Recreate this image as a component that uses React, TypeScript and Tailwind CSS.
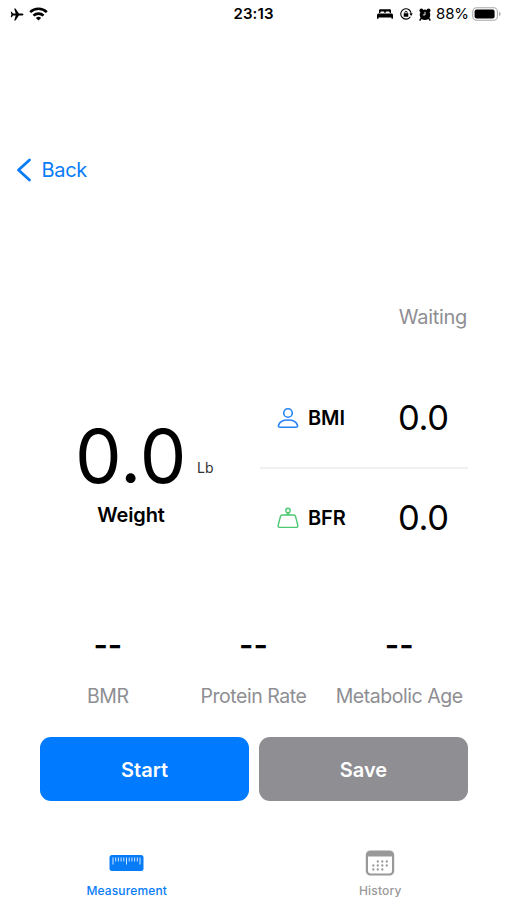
const stats = ["BMR", "Protein Rate", "Metabolic Age"];

const calendarDots = [
  [12.8, 12.5], [17.3, 12.5], [21.8, 12.5],
  [8.3, 16.5], [12.8, 16.5], [17.3, 16.5], [21.8, 16.5],
  [8.3, 20.5], [12.8, 20.5], [17.3, 20.5],
];

function StatusBar() {
  return (
    <header className="grid h-7 shrink-0 grid-cols-3 items-center text-black">
      <div className="flex items-center gap-[5px] pl-2.5">
        <svg className="h-[13px] w-[14px]" viewBox="0 0 14 13" fill="currentColor">
          <path d="M13.5 6.5c0-.7-.9-1.1-2-1.1H8.9L5.5.6H4.2l1.5 4.8H3L1.7 3.8H.7l.7 2.7-.7 2.7h1L3 7.6h2.7l-1.5 4.8h1.3l3.4-4.8h2.6c1.1 0 2-.4 2-1.1z" />
        </svg>
        <svg className="h-[14px] w-[19px]" viewBox="0 0 19 14" fill="none" stroke="currentColor" strokeWidth="2.7">
          <path d="M1.2 5.1a12 12 0 0 1 16.6 0" />
          <path d="M4.5 8.6a7.2 7.2 0 0 1 10 0" />
          <path d="M9.5 13.6 6.9 11a3.8 3.8 0 0 1 5.2 0z" fill="currentColor" stroke="none" />
        </svg>
      </div>
      <div className="text-center text-[15px] font-semibold tracking-[0.1px]">23:13</div>
      <div className="flex items-center justify-end pr-1.5">
        <svg className="mr-[7px] h-[10px] w-[16px]" viewBox="0 0 16 10" fill="currentColor">
          <path d="M2 4V1.5C2 .6 2.6.2 3.4.2h9.2c.8 0 1.4.4 1.4 1.3V4h-1.3V3.2c0-.5-.3-.8-.8-.8H9.4c-.5 0-.8.3-.8.8V4H7.4v-.8c0-.5-.3-.8-.8-.8H4.1c-.5 0-.8.3-.8.8V4zM0 6.3c0-1 .7-1.7 1.7-1.7h12.6c1 0 1.7.7 1.7 1.7v3.5h-1.5V8.4h-13v1.4H0z" />
        </svg>
        <svg className="mr-[6px] h-[12px] w-[13px]" viewBox="0 0 13 12" fill="none" stroke="currentColor" strokeWidth="1.1">
          <path d="M10.4 8.7A5.2 5.2 0 1 1 11.2 6" />
          <path d="M9.4 5.4h3.4L11.1 7.9z" fill="currentColor" stroke="none" />
          <rect x="3.7" y="5.3" width="4.6" height="3.5" rx=".5" fill="currentColor" stroke="none" />
          <path d="M4.8 5.4V4.5a1.2 1.2 0 0 1 2.4 0v.9" strokeWidth=".9" />
        </svg>
        <svg className="mr-[5px] h-[13px] w-[12px]" viewBox="0 0 12 13" fill="currentColor">
          <circle cx="6" cy="6.7" r="5.3" />
          <circle cx="2.4" cy="2.4" r="1.9" />
          <circle cx="9.6" cy="2.4" r="1.9" />
          <path d="m2.4 10-1.3 2M9.6 10l1.3 2" stroke="currentColor" strokeWidth="1.5" strokeLinecap="round" />
          <path d="M6 3.8v3.1H3.9" fill="none" stroke="#fff" strokeWidth=".9" />
        </svg>
        <span className="mr-[3px] text-[15px] tracking-[-0.1px]">88%</span>
        <svg className="h-[14px] w-[29px]" viewBox="0 0 29 14" fill="none">
          <rect x=".8" y=".8" width="24.6" height="12.4" rx="3.8" stroke="#a8a8a8" strokeWidth="1.1" />
          <rect x="2.6" y="2.6" width="20" height="8.8" rx="2" fill="#000" />
          <path d="M27 4.8c1.1.4 1.5 1.2 1.5 2.2S28.1 8.8 27 9.2z" fill="#a8a8a8" />
        </svg>
      </div>
    </header>
  );
}

function PersonIcon() {
  return (
    <svg className="h-[22px] w-[22px]" viewBox="0 0 22 22" fill="none" stroke="#2683f5" strokeWidth="1.6">
      <circle cx="11" cy="6" r="4.3" />
      <path d="M3.2 20.2C1.8 20.2 1.2 19.5 1.5 18.3 2.4 15.1 6.2 13 11 13s8.6 2.1 9.5 5.3c.3 1.2-.3 1.9-1.7 1.9z" />
    </svg>
  );
}

function WeightIcon() {
  return (
    <svg className="h-[22px] w-[22px]" viewBox="0 0 22 22" fill="none" stroke="#4cc96f" strokeWidth="1.4">
      <circle cx="11" cy="3.4" r="2.2" />
      <path d="M11 5.6v1.7M5.3 8h11.4c.9 0 1.5.4 1.8 1.3l2.3 9c.3 1.3-.3 2.1-1.5 2.1H2.7c-1.2 0-1.8-.8-1.5-2.1l2.3-9C3.8 8.4 4.4 8 5.3 8zM8.8 8c.2-.5.9-.9 2.2-.9s2 .4 2.2.9" />
    </svg>
  );
}

function MetricRow({ icon, label, value }: { icon: React.ReactNode; label: string; value: string }) {
  return (
    <div className="flex h-[98px] items-center pl-[17px]">
      {icon}
      <span className="ml-[9px] w-[90px] text-[20px] font-semibold tracking-[-0.1px]">{label}</span>
      <span className="text-[34.5px] leading-none tracking-[-0.4px]">{value}</span>
    </div>
  );
}

export default function App() {
  return (
    <div className="flex h-[900px] w-[507px] flex-col overflow-hidden bg-white font-['Inter',sans-serif] text-black [font-feature-settings:'ss03']">
      <StatusBar />

      <nav className="mt-[127px] flex h-[30px] shrink-0 items-center pl-4">
        <button type="button" className="flex items-center text-[20px] tracking-[-0.3px] text-[#087cf7]">
          <svg className="mr-[9.5px] h-6 w-4" viewBox="0 0 16 24" fill="none" stroke="currentColor" strokeWidth="2.8" strokeLinecap="round" strokeLinejoin="round">
            <path d="M13.5 2 2.5 12l11 10" />
          </svg>
          <span>Back</span>
        </button>
      </nav>

      <p className="mt-[117px] h-[30px] shrink-0 pr-10 text-right text-[20px] leading-[30px] tracking-[-0.3px] text-[#8e8e93]">
        Waiting
      </p>

      {/* Readings */}
      <section className="mt-9 flex h-[201px] shrink-0 pl-10">
        <div className="w-[220px] pt-[50px]">
          <div className="flex items-baseline pl-[35px]">
            <span className="w-[122px] text-[74px] leading-[76px] tracking-[0.2px]">0.0</span>
            <span className="relative -top-2.5 text-[14px] text-[#333]">Lb</span>
          </div>
          <div className="w-[182px] pt-1 text-center text-[20px] font-semibold leading-[34px] tracking-[-0.1px]">Weight</div>
        </div>
        <div className="w-[208px] pt-px">
          <MetricRow icon={<PersonIcon />} label="BMI" value="0.0" />
          <div className="h-0.5 bg-[#f1f1f2]" />
          <MetricRow icon={<WeightIcon />} label="BFR" value="0.0" />
        </div>
      </section>

      <section className="mt-[61px] grid shrink-0 grid-cols-3 px-[35px] text-center">
        {stats.map((label) => (
          <div key={label}>
            <div className="text-[31px] font-semibold leading-[30px]">--</div>
            <div className="mt-[21px] whitespace-nowrap text-[19.5px] leading-[30px] tracking-[-0.45px] text-[#8e8e93]">{label}</div>
          </div>
        ))}
      </section>

      {/* Actions */}
      <div className="mt-[26px] flex shrink-0 gap-2.5 pl-10 text-[20px] font-semibold text-white">
        <button type="button" className="h-16 w-[209px] rounded-[11px] bg-[#007aff] pt-px">Start</button>
        <button type="button" className="h-16 w-[209px] rounded-[11px] bg-[#8e8e93] pt-px">Save</button>
      </div>

      <footer className="mt-[48px] grid shrink-0 grid-cols-2 text-center text-[12px] font-medium tracking-[0.15px]">
        <div className="flex flex-col items-center text-[#087cf7]">
          <svg className="h-[28px] w-[35px]" viewBox="0 0 35 28">
            <rect x="0.5" y="6" width="34" height="16" rx="2.5" fill="currentColor" />
            <path d="M4 8.5v7M6.7 8.5v4M9.4 8.5v4M12.1 8.5v4M14.8 8.5v4M17.5 8.5v7M20.2 8.5v4M22.9 8.5v4M25.6 8.5v4M28.3 8.5v4M31 8.5v7" stroke="#fff" strokeWidth="1" strokeOpacity=".8" />
          </svg>
          <span className="mt-[5px]">Measurement</span>
        </div>
        <div className="flex flex-col items-center text-[#999]">
          <svg className="h-[28px] w-[30px]" viewBox="0 0 30 28" fill="none">
            <rect x="1.9" y="2.5" width="26.2" height="23" rx="3.5" stroke="currentColor" strokeWidth="2.2" />
            <path d="M2 7.5v-2C2 3 3.5 2 5.5 2h19C26.5 2 28 3 28 5.5v2z" fill="currentColor" />
            {calendarDots.map(([x, y]) => (
              <circle key={`${x}-${y}`} cx={x} cy={y} r="1.15" fill="currentColor" />
            ))}
          </svg>
          <span className="mt-[5px]">History</span>
        </div>
      </footer>
    </div>
  );
}
